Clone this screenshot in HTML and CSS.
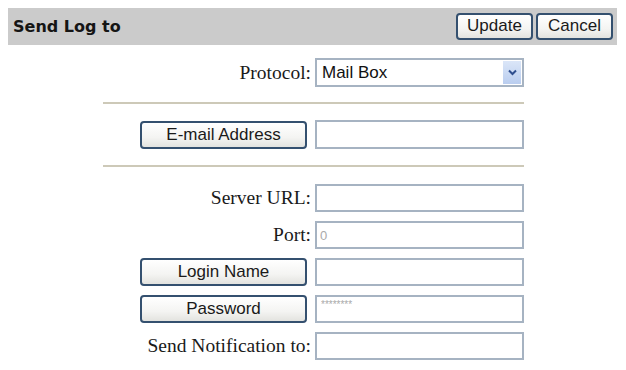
FILE: index.html
```html
<!DOCTYPE html>
<html lang="en">
<head>
    <meta charset="UTF-8">
    <title>Send Log to</title>
    <link rel="stylesheet" href="styles.css">
</head>
<body>
    <div class="panel">
        <div class="panel-head">
            <h2>Send Log to</h2>
            <div class="head-buttons">
                <button class="btn btn-head">Update</button>
                <button class="btn btn-head">Cancel</button>
            </div>
        </div>

        <div class="form">
            <div class="row row-first">
                <label class="label">Protocol:</label>
                <div class="select-wrap">
                    <select class="field select">
                        <option>Mail Box</option>
                    </select>
                    <span class="select-arrow">
                        <svg width="9" height="7" viewBox="0 0 9 7"><path d="M1 1.5 L4.5 5 L8 1.5" fill="none" stroke="#2f4f8f" stroke-width="2"/></svg>
                    </span>
                </div>
            </div>

            <hr class="sep sep-1">

            <div class="row row-mail">
                <div class="label"><button class="btn btn-field">E-mail Address</button></div>
                <input class="field" type="text">
            </div>

            <hr class="sep sep-2">

            <div class="row row-server">
                <label class="label">Server URL:</label>
                <input class="field" type="text">
            </div>
            <div class="row">
                <label class="label">Port:</label>
                <input class="field field-port" type="text" value="0">
            </div>
            <div class="row">
                <div class="label"><button class="btn btn-field">Login Name</button></div>
                <input class="field" type="text">
            </div>
            <div class="row">
                <div class="label"><button class="btn btn-field">Password</button></div>
                <input class="field field-pass" type="text" value="********">
            </div>
            <div class="row">
                <label class="label">Send Notification to:</label>
                <input class="field" type="text">
            </div>
        </div>
    </div>
</body>
</html>
```

FILE: styles.css
```css
/* page */
body {
    margin: 8px;
    background: #fff;
    font-family: "Liberation Serif", "Times New Roman", serif;
}

.panel {
    width: 609px;
}

/* grey title bar */
.panel-head {
    height: 37px;
    background: #cbcbcb;
    display: flex;
    align-items: center;
    justify-content: space-between;
}

.panel-head h2 {
    margin: 0 0 0 5px;
    font-family: "DejaVu Sans", Verdana, sans-serif;
    font-weight: bold;
    font-size: 16px;
    color: #151515;
}

.head-buttons {
    display: flex;
    gap: 3px;
    margin-right: 4px;
    margin-top: -1px;
}

/* buttons */
.btn {
    font-family: "Liberation Sans", Arial, sans-serif;
    font-size: 17px;
    color: #1a1a1a;
    background: linear-gradient(#ffffff, #f4f4f2 60%, #e3e3df);
    border: 2px solid #34506f;
    border-radius: 4px;
    padding: 0;
    cursor: pointer;
}

.btn-head {
    width: 77px;
    height: 27px;
}

.btn-field {
    width: 167px;
    height: 28px;
    margin-right: 4px;
}

/* form rows */
.form {
    display: flex;
    flex-direction: column;
}

.row {
    display: flex;
    align-items: center;
    height: 28px;
    margin-top: 9px;
}

.row-first {
    height: 29px;
    margin-top: 13px;
}

.row-mail {
    margin-top: 16px;
    height: 29px;
}

.row-server {
    margin-top: 17px;
}

.label {
    width: 303px;
    padding-right: 4px;
    text-align: right;
    font-size: 19.5px;
    color: #1a1a1a;
    display: flex;
    justify-content: flex-end;
}

.field {
    box-sizing: border-box;
    width: 209px;
    height: 28px;
    margin: 0;
    border: 2px solid #a6b3c2;
    background: #fff;
    font-family: "Liberation Sans", Arial, sans-serif;
    font-size: 17px;
    padding: 0 5px;
    outline: none;
}

.row-mail .field {
    height: 29px;
}

.field-port {
    color: #aaa;
    font-size: 13px;
    padding-left: 3px;
}

.field-pass {
    color: #aaa;
    font-size: 10px;
    padding: 0 0 10px 4px;
}

/* protocol select */
.select-wrap {
    position: relative;
    width: 209px;
    height: 29px;
}

.select {
    height: 29px;
    appearance: none;
    padding-left: 5px;
    color: #111;
}

.select-arrow {
    position: absolute;
    right: 3px;
    top: 3px;
    width: 18px;
    height: 23px;
    background: linear-gradient(#dbe6f8, #b9cdef);
    display: flex;
    align-items: center;
    justify-content: center;
    pointer-events: none;
}

/* separators */
.sep {
    border: none;
    height: 2px;
    background: #cdc9b8;
    width: 421px;
    margin: 15px 0 0 95px;
}

.sep-2 {
    margin-top: 16px;
}
```
